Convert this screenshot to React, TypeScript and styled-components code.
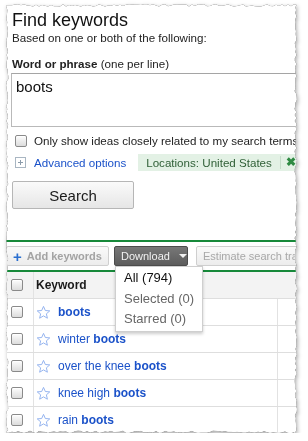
import styled, { createGlobalStyle } from "styled-components";

const GlobalStyle = createGlobalStyle`
  html, body {
    margin: 0;
    padding: 0;
    background: #fff;
  }
  body {
    font-family: "Liberation Sans", Arial, Helvetica, sans-serif;
    color: #222;
  }
`;

const PAPER_W = 291;
const PAPER_H = 429;

// deterministic jitter for the torn paper edge
const jitter = (i: number) => {
  const x = Math.sin(i * 12.9898 + 3.1) * 43758.5453;
  return x - Math.floor(x) - 0.5;
};

const tornEdge = (() => {
  const pts: string[] = [];
  let k = 0;
  const j = () => jitter(k++) * 2.4;
  for (let x = 0; x <= PAPER_W; x += 3) pts.push(`${x}px ${1.3 + j()}px`);
  for (let y = 3; y <= PAPER_H; y += 3) pts.push(`${PAPER_W - 1.3 + j()}px ${y}px`);
  for (let x = PAPER_W - 3; x >= 0; x -= 3) pts.push(`${x}px ${PAPER_H - 1.3 + j()}px`);
  for (let y = PAPER_H - 3; y > 0; y -= 3) pts.push(`${1.3 + j()}px ${y}px`);
  return `polygon(${pts.join(",")})`;
})();

const Page = styled.div`
  padding: 4px 0 0 6px;
`;

const Shadow = styled.div`
  width: ${PAPER_W}px;
  filter: drop-shadow(0 0 0.7px rgba(0, 0, 0, 0.75)) drop-shadow(1px 2px 2px rgba(0, 0, 0, 0.35));
`;

const Paper = styled.div`
  position: relative;
  width: ${PAPER_W}px;
  height: ${PAPER_H}px;
  background: #fff;
  overflow: hidden;
  clip-path: ${tornEdge};
  font-size: 11.6px;
`;

const Top = styled.div`
  padding-top: 6px;
`;

const Heading = styled.h1`
  margin: 0 0 0 6px;
  font-size: 18px;
  line-height: 21px;
  font-weight: normal;
  color: #111;
  white-space: nowrap;
`;

const Hint = styled.div`
  margin-left: 6px;
  line-height: 14px;
  white-space: nowrap;
`;

const Label = styled.div`
  margin: 12px 0 0 6px;
  line-height: 14px;
  white-space: nowrap;
  b {
    font-weight: bold;
  }
`;

const Area = styled.div`
  box-sizing: border-box;
  margin: 2px 0 0 5px;
  width: 320px;
  height: 54px;
  border: 1px solid #b9b9b9;
  border-top-color: #a5a5a5;
  padding: 4px 4px;
  font-size: 15px;
  line-height: 18px;
  color: #111;
`;

const CheckRow = styled.label`
  display: flex;
  align-items: center;
  gap: 7px;
  margin: 7px 0 0 9px;
  line-height: 14px;
  white-space: nowrap;
`;

const Box = styled.span`
  box-sizing: border-box;
  flex: none;
  display: inline-block;
  width: 12px;
  height: 12px;
  border: 1px solid #8a8a8a;
  border-radius: 2px;
  background: linear-gradient(#fdfdfd, #dcdcdc);
  box-shadow: inset 0 1px 0 #fff;
`;

const OptionsRow = styled.div`
  display: flex;
  align-items: center;
  height: 17px;
  margin: 6px 0 0 9px;
  white-space: nowrap;
`;

const PlusBox = styled.span`
  box-sizing: border-box;
  position: relative;
  width: 11px;
  height: 11px;
  border: 1px solid #a9b6c2;
  margin-right: 8px;
  &::before,
  &::after {
    content: "";
    position: absolute;
    background: #8c9cab;
  }
  &::before {
    left: 2px;
    top: 4px;
    width: 5px;
    height: 1px;
  }
  &::after {
    left: 4px;
    top: 2px;
    width: 1px;
    height: 5px;
  }
`;

const LinkText = styled.span`
  color: #1b52c9;
`;

const Chip = styled.div`
  display: flex;
  align-items: center;
  height: 17px;
  margin-left: 12px;
  padding-left: 8px;
  background: #e3f1e5;
  color: #2f5f36;
`;

const ChipClose = styled.span`
  margin-left: 8px;
  padding-left: 5px;
  height: 13px;
  line-height: 13px;
  border-left: 1px solid #c5dcc9;
  color: #2f8a43;
  font-weight: bold;
  font-size: 12px;
`;

const SearchButton = styled.button`
  display: block;
  box-sizing: border-box;
  margin: 10px 0 0 6px;
  width: 122px;
  height: 28px;
  border: 1px solid #b6b6b6;
  border-radius: 2px;
  background: linear-gradient(#fafafa, #e6e6e6);
  font-family: inherit;
  font-size: 15px;
  color: #1a1a1a;
  padding: 0;
`;

const Results = styled.div`
  margin-top: 31px;
  border-top: 2px solid #17893a;
`;

const Toolbar = styled.div`
  display: flex;
  align-items: center;
  padding: 4px 0;
  border-bottom: 2px solid #17893a;
  white-space: nowrap;
`;

const ToolButton = styled.div<{ $dark?: boolean; $w: number; $gap?: number }>`
  position: relative;
  box-sizing: border-box;
  flex: none;
  display: flex;
  align-items: center;
  width: ${(p) => p.$w}px;
  height: 20px;
  margin-left: ${(p) => p.$gap ?? 0}px;
  padding: 0 6px;
  border: 1px solid ${(p) => (p.$dark ? "#4c4c4c" : "#cfcfcf")};
  border-radius: 2px;
  background: ${(p) => (p.$dark ? "linear-gradient(#777, #5c5c5c)" : "linear-gradient(#fafafa, #ececec)")};
  color: ${(p) => (p.$dark ? "#f2f2f2" : "#a8a8a8")};
  font-size: 11px;
`;

const AddLabel = styled.span`
  font-weight: bold;
  color: #a3a3a3;
`;

const PlusSign = styled.span`
  color: #2a6fd0;
  font-weight: bold;
  font-size: 15px;
  margin: 0 5px 0 0;
  line-height: 1;
`;

const Caret = styled.span`
  margin-left: 9px;
  width: 0;
  height: 0;
  border-left: 4px solid transparent;
  border-right: 4px solid transparent;
  border-top: 4px solid #f2f2f2;
`;

const Menu = styled.div`
  position: absolute;
  left: 0;
  top: 19px;
  z-index: 2;
  box-sizing: border-box;
  width: 88px;
  height: 66px;
  padding-top: 1px;
  background: #fff;
  border: 1px solid #cfcfcf;
  box-shadow: 0 2px 3px rgba(0, 0, 0, 0.2);
`;

const MenuItem = styled.div<{ $muted?: boolean }>`
  padding-left: 8px;
  height: 20.5px;
  line-height: 20px;
  font-size: 13px;
  color: ${(p) => (p.$muted ? "#666" : "#111")};
`;

const Row = styled.div<{ $head?: boolean }>`
  display: flex;
  height: ${(p) => (p.$head ? 26 : 26)}px;
  border-bottom: 1px solid #dedede;
  background: ${(p) => (p.$head ? "#f3f3f3" : "#fff")};
  font-size: 12px;
`;

const CheckCell = styled.div`
  box-sizing: border-box;
  width: 28px;
  flex: none;
  display: flex;
  align-items: center;
  padding-left: 5px;
  border-right: 1px solid #e2e2e2;
`;

const KeyCell = styled.div<{ $head?: boolean }>`
  box-sizing: border-box;
  width: 244px;
  flex: none;
  display: flex;
  align-items: center;
  gap: 7px;
  padding-left: 2px;
  border-right: 1px solid ${(p) => (p.$head ? "transparent" : "#e2e2e2")};
  white-space: nowrap;
`;

const HeadText = styled.span`
  font-weight: bold;
  color: #1a1a1a;
`;

const Keyword = styled.span`
  color: #1b52c9;
  b {
    font-weight: bold;
  }
`;

const Star = () => (
  <svg width="15" height="15" viewBox="0 0 24 24">
    <path
      d="M12 2.2l2.9 6.6 7.1.6-5.4 4.7 1.6 7-6.2-3.7-6.2 3.7 1.6-7L2 9.4l7.1-.6z"
      fill="#fff"
      stroke="#8fb0ee"
      strokeWidth="1.5"
      strokeLinejoin="round"
    />
  </svg>
);

const KEYWORDS = [
  { pre: "", bold: "boots" },
  { pre: "winter ", bold: "boots" },
  { pre: "over the knee ", bold: "boots" },
  { pre: "knee high ", bold: "boots" },
  { pre: "rain ", bold: "boots" },
];

const App = () => {
  return (
    <Page>
      <GlobalStyle />
      <Shadow>
        <Paper>
          <Top>
            <Heading>Find keywords</Heading>
            <Hint>Based on one or both of the following:</Hint>
            <Label>
              <b>Word or phrase</b> (one per line)
            </Label>
            <Area>boots</Area>
            <CheckRow>
              <Box />
              Only show ideas closely related to my search terms
            </CheckRow>
            <OptionsRow>
              <PlusBox />
              <LinkText>Advanced options</LinkText>
              <Chip>
                Locations: United States
                <ChipClose>✖</ChipClose>
              </Chip>
            </OptionsRow>
            <SearchButton>Search</SearchButton>
          </Top>

          <Results>
            <Toolbar>
              <ToolButton $w={103}>
                <PlusSign>+</PlusSign>
                <AddLabel>Add keywords</AddLabel>
              </ToolButton>
              <ToolButton $dark $w={74} $gap={5}>
                Download
                <Caret />
                <Menu>
                  <MenuItem>All (794)</MenuItem>
                  <MenuItem $muted>Selected (0)</MenuItem>
                  <MenuItem $muted>Starred (0)</MenuItem>
                </Menu>
              </ToolButton>
              <ToolButton $w={140} $gap={8}>
                Estimate search traffic
              </ToolButton>
            </Toolbar>

            <Row $head>
              <CheckCell>
                <Box />
              </CheckCell>
              <KeyCell $head>
                <HeadText>Keyword</HeadText>
              </KeyCell>
            </Row>
            {KEYWORDS.map((k) => (
              <Row key={k.pre + k.bold}>
                <CheckCell>
                  <Box />
                </CheckCell>
                <KeyCell>
                  <Star />
                  <Keyword>
                    {k.pre}
                    <b>{k.bold}</b>
                  </Keyword>
                </KeyCell>
              </Row>
            ))}
          </Results>
        </Paper>
      </Shadow>
    </Page>
  );
};

export default App;
